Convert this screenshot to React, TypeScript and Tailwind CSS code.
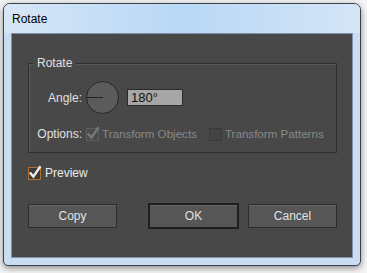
import React from "react";

const font = { fontFamily: '"Liberation Sans", Arial, sans-serif' };

function Check({ border, fill, mark }: { border: string; fill: string; mark?: string }) {
  return (
    <svg width="14" height="14" viewBox="0 0 14 14" className="shrink-0 overflow-visible">
      <rect x="0.5" y="1.5" width="12" height="12" fill={fill} stroke={border} />
      {mark && (
        <path d="M2.6 7.4 L5.4 10.6 L11.8 1.2" fill="none" stroke={mark} strokeWidth="2.4" strokeLinecap="square" />
      )}
    </svg>
  );
}

export default function App() {
  return (
    <div className="w-[367px] h-[273px] bg-[#f4f4f4] overflow-hidden" style={font}>
      <div className="ml-[3px] mt-[3px] w-[358px] h-[263px] rounded-t-[7px] rounded-b-[5px] border border-[#39434e] bg-[#c9ddf1] shadow-[0_2px_6px_rgba(0,0,0,0.45)] flex flex-col overflow-hidden">
        <div className="h-[29px] shrink-0 flex items-center pl-[8px] text-[12px] text-black bg-gradient-to-r from-[#d6e6f6] via-[#b9d8f7] to-[#d4e5f6]">
          Rotate
        </div>
        <div className="mx-[7px] h-[225px] border border-[#7f93a8] bg-[#484848] flex flex-col pl-[16px] pt-[29px] text-[12px]">
          <div className="relative w-[309px] h-[90px] border border-[#2f2f2f] shadow-[inset_1px_1px_0_#585858] pl-[8px] pt-[17px] flex flex-col">
            <div className="absolute left-[4px] top-[-8px] px-[4px] bg-[#484848] text-[#e0e0e0] leading-[14px]">Rotate</div>
            <div className="flex items-center h-[33px]">
              <div className="w-[45px] text-right text-[#e0e0e0]">Angle:</div>
              <div className="ml-[4px] w-[33px] h-[33px] rounded-full border border-[#262626] bg-[#5b5b5b] relative">
                <div className="absolute left-0 top-[15px] w-[16px] h-[1px] bg-[#222]" />
              </div>
              <div className="ml-[8px] w-[56px] h-[17px] border border-[#2b2b2b] bg-[#a6a6a6] text-[#111] pl-[3px] leading-[15px] text-[13px]">
                180°
              </div>
            </div>
            <div className="flex items-center mt-[13px] h-[13px]">
              <div className="w-[45px] text-right text-[#e0e0e0]">Options:</div>
              <div className="ml-[4px] flex items-center">
                <Check border="#5e5e5e" fill="#4b4b4b" mark="#767676" />
                <span className="ml-[2px] text-[11.6px] text-[#888]">Transform Objects</span>
              </div>
              <div className="ml-[12px] flex items-center">
                <Check border="#393939" fill="#444" />
                <span className="ml-[2px] text-[11.6px] text-[#888]">Transform Patterns</span>
              </div>
            </div>
          </div>
          <div className="flex items-center mt-[13px] h-[14px]">
            <Check border="#b0702c" fill="#3c3c3c" mark="#ececec" />
            <span className="ml-[3px] text-[#ececec]">Preview</span>
          </div>
          <div className="flex items-center mt-[23px]">
            <div className="w-[89px] h-[24px] border border-[#2c2c2c] bg-[#565656] shadow-[inset_0_1px_0_#666] flex items-center justify-center text-[#e2e2e2]">
              Copy
            </div>
            <div className="ml-[31px] w-[91px] h-[26px] border-2 border-[#1f1f1f] bg-[#565656] shadow-[inset_0_1px_0_#666] flex items-center justify-center text-[#e2e2e2]">
              OK
            </div>
            <div className="ml-[9px] w-[89px] h-[24px] border border-[#2c2c2c] bg-[#565656] shadow-[inset_0_1px_0_#666] flex items-center justify-center text-[#e2e2e2]">
              Cancel
            </div>
          </div>
        </div>
      </div>
    </div>
  );
}
